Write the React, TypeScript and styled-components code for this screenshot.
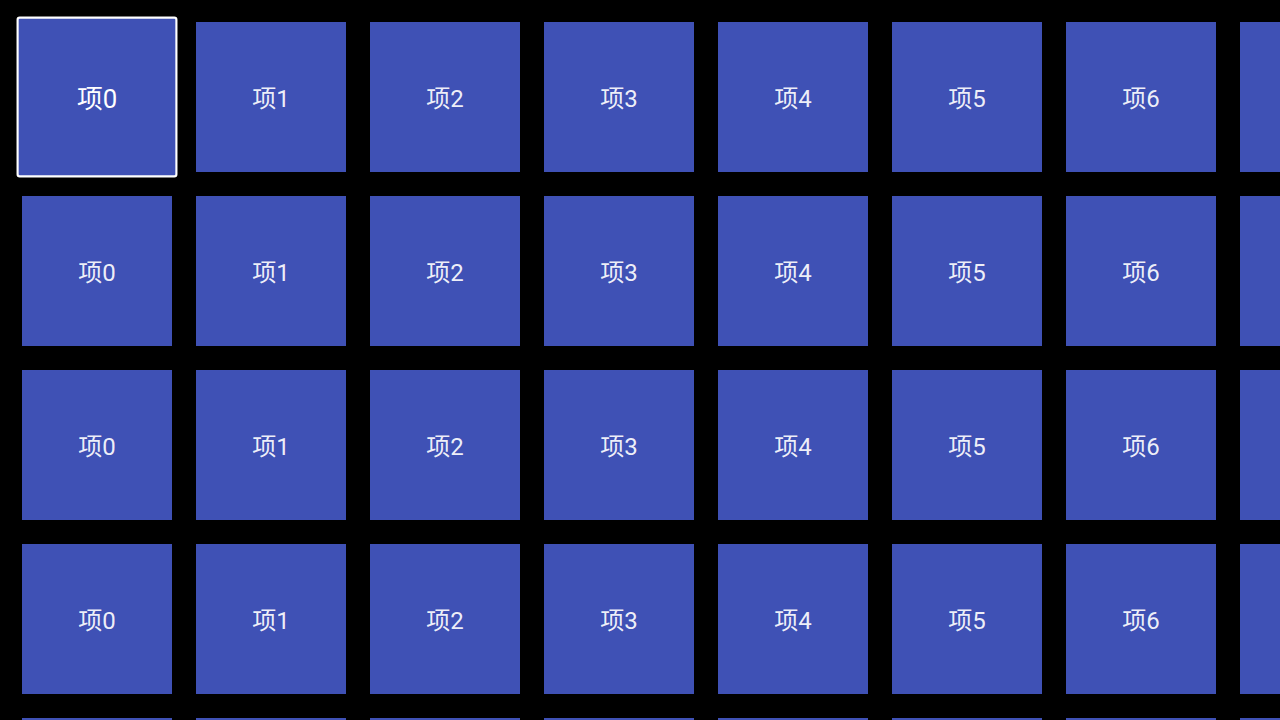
import React from 'react';
import styled, {createGlobalStyle} from "styled-components";

const GlobalStyle = createGlobalStyle`
    html, body {
        margin: 0;
        padding: 0;
        background-color: #000;
        overflow: hidden;
    }
`

const ROWS = 5;
const COLS = 10;

export default function App() {
    const rows = Array.from({length: ROWS}, (_, r) => r);
    const cols = Array.from({length: COLS}, (_, c) => c);
    return (
        <>
            <GlobalStyle/>
            <Screen>
                <Grid>
                    {rows.map(r =>
                        cols.map(c => (
                            <Tile key={`${r}-${c}`} $focused={r === 0 && c === 0}>
                                项{c}
                            </Tile>
                        ))
                    )}
                </Grid>
            </Screen>
        </>
    );
}

const Screen = styled.div`
    width: 1280px;
    height: 720px;
    overflow: hidden;
    background-color: #000;
`

const Grid = styled.div`
    display: grid;
    grid-template-columns: repeat(${COLS}, 150px);
    grid-auto-rows: 150px;
    gap: 24px;
    padding: 22px;
    width: max-content;
`

const Tile = styled.div<{ $focused?: boolean }>`
    display: flex;
    align-items: center;
    justify-content: center;
    padding-top: 4px;
    background-color: #3f51b5;
    color: rgba(255, 255, 255, 0.92);
    font-family: Roboto, "Noto Sans CJK SC", sans-serif;
    font-size: 24px;
    line-height: 1;
    box-sizing: border-box;
    ${p => p.$focused && `
        transform: scale(1.073);
        border: 2px solid #fff;
        border-radius: 3px;
        color: #fff;
    `}
`
